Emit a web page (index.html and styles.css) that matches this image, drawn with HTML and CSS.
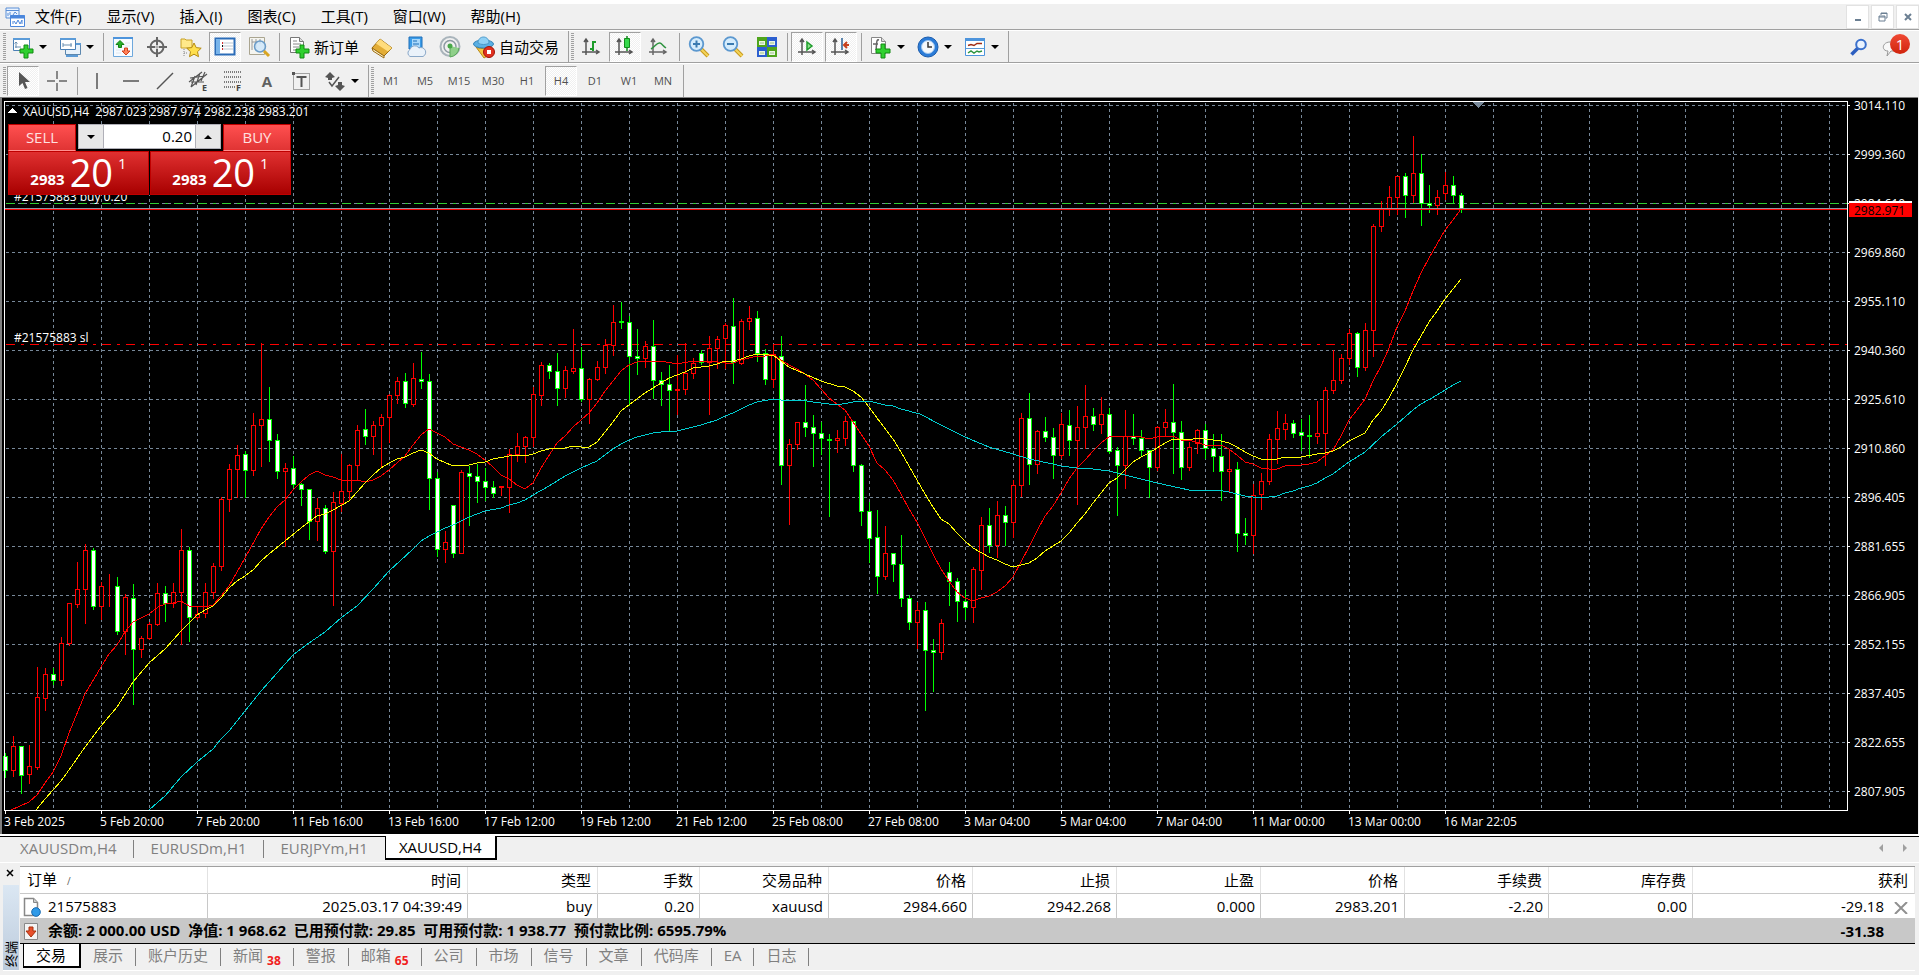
FILE: index.html
```html
<!DOCTYPE html>
<html lang="zh-CN">
<head>
  <meta charset="UTF-8">
  <title>XAUUSD,H4</title>
  <link rel="stylesheet" href="styles.css">
</head>
<body>
  <header class="menubar">
    <svg class="app-icon" width="20" height="20" viewBox="0 0 20 20" fill="none" stroke="#5b8fd6">
      <path d="M1 1h13v10H1zM1 3.500h13" fill="#eaf3ff"/>
      <path d="M3 9V6M5 8V5M8 8l2-3 2 2"/>
      <path d="M5.500 8.500h14v11h-14z" fill="#fff" stroke="#4a86dc"/>
      <path d="M5 10h15" stroke="#4a86dc" stroke-width="3"/>
      <path d="M8 17v-3M9 14l2 3 2-4 2 4 2-4v4" stroke="#4a86dc"/>
    </svg>
    <nav class="menu">
      <a href="#">文件(F)</a>
      <a href="#">显示(V)</a>
      <a href="#">插入(I)</a>
      <a href="#">图表(C)</a>
      <a href="#">工具(T)</a>
      <a href="#">窗口(W)</a>
      <a href="#">帮助(H)</a>
    </nav>
    <div class="window-buttons">
      <button aria-label="最小化"><svg width="12" height="12"><path d="M3 9h6" stroke="#6b7f92" stroke-width="2"/></svg></button>
      <button aria-label="还原"><svg width="12" height="12" fill="none" stroke="#6b7f92"><path d="M4 4V2h6v5H8.500M4 2.500h6M2 5h6v5H2zM2 6h6"/></svg></button>
      <button aria-label="关闭"><svg width="12" height="12"><path d="M3 3l6 6M9 3l-6 6" stroke="#6b7f92" stroke-width="2"/></svg></button>
    </div>
  </header>

  <div class="toolbar toolbar-main">
    <span class="grip"></span>
    <button class="tool drop" aria-label="新图表">
      <svg width="22" height="22" viewBox="0 0 22 22"><path d="M1.500 2.500h16v12h-16z" fill="#fff" stroke="#4a7fb5"/><path d="M1 3h17" stroke="#5b9bd8" stroke-width="2"/><path d="M4 12V6M2.500 7.500L4 6l1.500 1.500M3 11h6" stroke="#6b8fb0" fill="none"/><path d="M12 9h4v4h5v4h-5v5h-4v-5H8v-4h4z" fill="#2fd02f" stroke="#138a13"/></svg>
      <i class="caret"></i>
    </button>
    <button class="tool drop" aria-label="模板">
      <svg width="22" height="22" viewBox="0 0 22 22"><path d="M6.500 7.500h15v11h-15z" fill="#e8f2fb" stroke="#5c87ae"/><path d="M6 8h16M7 20h12" stroke="#5c9bd6" stroke-width="2"/><path d="M1.500 2.500h15v11h-15z" fill="#fff" stroke="#4a7fb5"/><path d="M1 3h16" stroke="#5b9bd8" stroke-width="2"/><path d="M4 7v4M4 9h9M12 7v4" stroke="#6b8fb0"/></svg>
      <i class="caret"></i>
    </button>
    <span class="sep"></span>
    <button class="tool" aria-label="市场报价">
      <svg width="22" height="22" viewBox="0 0 22 22"><path d="M1.500 1.500h19v19h-19z" fill="#f7fbff" stroke="#6ea8dc"/><path d="M1 2h20" stroke="#4d94dc" stroke-width="2"/><path d="M4 7h5M4 10h5M13 7h5M13 10h5M4 14h5M4 17h5" stroke="#dfe8f0"/><path d="M8 4.500l4 4H9.500v3h-3v-3H4z" fill="#28b028" stroke="#128012"/><path d="M14 19l-4-4h2.500v-3h3v3H18z" fill="#ff8058" stroke="#d0401c"/></svg>
    </button>
    <button class="tool" aria-label="数据窗口">
      <svg width="22" height="22" viewBox="0 0 22 22" fill="none" stroke="#666"><circle cx="11" cy="11" r="6.500" stroke-width="2"/><path d="M11 1v8M11 13v8M1 11h8M13 11h8" stroke-width="2"/><path d="M9 11h4M11 9v4" stroke="#999"/></svg>
    </button>
    <button class="tool" aria-label="导航">
      <svg width="22" height="22" viewBox="0 0 22 22"><path d="M1 3h4l1 1h6v8H1z" fill="#ffe98a" stroke="#c9a227"/><path d="M4 13v8M4 17h4" stroke="#888" stroke-dasharray="1 1"/><path d="M14 7l2.200 4.600 5 .6-3.700 3.500 1 5L14 18.200 9.500 20.700l1-5-3.700-3.500 5-.6z" fill="#ffdf4d" stroke="#b48a12"/></svg>
    </button>
    <button class="tool pressed" aria-label="终端">
      <svg width="22" height="22" viewBox="0 0 22 22"><path d="M1.500 2.500h19v16h-19z" fill="#fff" stroke="#2b6cb8" stroke-width="2"/><path d="M2 3h4v15H2z" fill="#78b4ea"/><path d="M9 7h10M9 10h10M9 13h10" stroke="#bcc7d2"/><path d="M8 7h1M8 13h1" stroke="#d33" stroke-width="2"/><path d="M8 10h1" stroke="#111" stroke-width="2"/></svg>
    </button>
    <button class="tool" aria-label="策略测试">
      <svg width="22" height="22" viewBox="0 0 22 22"><path d="M1.500 1.500h15v17h-15z" fill="#f5f5f0" stroke="#aaa590"/><path d="M4 3v11M8 3v9M12 3v5M4 6h9" stroke="#999"/><circle cx="12" cy="10.500" r="5.500" fill="#cfe6fa" fill-opacity=".85" stroke="#6b9cc8" stroke-width="1.500"/><path d="M16 15l5 5" stroke="#d9a520" stroke-width="3"/></svg>
    </button>
    <span class="sep"></span>
    <button class="tool label-tool">
      <svg width="22" height="22" viewBox="0 0 22 22"><path d="M2.500 1.500h9l4 4v11h-13z" fill="#fff" stroke="#777"/><path d="M11.500 1.500v4h4" fill="#ddd" stroke="#777"/><path d="M5 5h4M5 8h8M5 11h6M5 14h4" stroke="#888"/><path d="M12 9h4v4h5v4h-5v5h-4v-5H8v-4h4z" fill="#2fd02f" stroke="#138a13"/></svg>
      新订单
    </button>
    <button class="tool" aria-label="MetaEditor">
      <svg width="22" height="22" viewBox="0 0 22 22"><path d="M1 12l8-9 12 9-8 8z" fill="#e3ad36" stroke="#9a6b10"/><path d="M9 3l12 9-4 3.500L5 7.500z" fill="#ffdc7c"/><path d="M1 12l1 3 11 7v-2z" fill="#fff3cc" stroke="#9a6b10"/></svg>
    </button>
    <button class="tool" aria-label="MQL5">
      <svg width="22" height="22" viewBox="0 0 22 22"><path d="M4 1l13-0v12H4z" fill="#3b9ce8" stroke="#1f6fb8"/><path d="M7 3h8v8H7z" fill="#a9d8fb"/><path d="M8 8h6M8 5h4" stroke="#1f6fb8"/><path d="M5 20.500a4 4 0 010-7 5 5 0 019-1.500 4.300 4.300 0 014 8.500z" fill="#eaf2fa" stroke="#8aa8c8"/></svg>
    </button>
    <button class="tool" aria-label="信号">
      <svg width="22" height="22" viewBox="0 0 22 22" fill="none"><circle cx="11" cy="10.500" r="9.500" stroke="#a9b4bb" stroke-width="2"/><circle cx="11" cy="10.500" r="6" stroke="#8d9aa3" stroke-width="1.500"/><path d="M11 10v11a10 10 0 009-9" fill="#8fd08a" stroke="#5aa85a"/><circle cx="11" cy="10" r="2.500" fill="#48a848"/></svg>
    </button>
    <button class="tool label-tool">
      <svg width="22" height="22" viewBox="0 0 22 22"><path d="M3 11c2 2 12 2 15 0l-2 8-5 3z" fill="#f5c542" stroke="#b88a1a"/><ellipse cx="10.500" cy="8" rx="10" ry="4" fill="#5bb0e4" stroke="#2d7fb5"/><path d="M5 7c0-8 11-8 11 0-3 2-8 2-11 0z" fill="#8fd0f5" stroke="#4a98c8"/><circle cx="16" cy="16" r="5.500" fill="#e03020" stroke="#a01408"/><path d="M14 14h4v4h-4z" fill="#fff"/></svg>
      自动交易
    </button>
    <span class="sep end"></span>
    <span class="grip"></span>
    <button class="tool" aria-label="柱状图">
      <svg width="22" height="22" viewBox="0 0 22 22" fill="none"><path d="M6 3v16M2 16h17M4 6l2-3 2 3M16 14l3 2-3 2" stroke="#555" stroke-width="1.500"/><path d="M13 5v10M13 6h3M10 13h3" stroke="#1d9c2a" stroke-width="2"/></svg>
    </button>
    <button class="tool pressed" aria-label="蜡烛图">
      <svg width="22" height="22" viewBox="0 0 22 22" fill="none"><path d="M5 3v16M1 16h17M3 6l2-3 2 3M15 14l3 2-3 2" stroke="#555" stroke-width="1.500"/><path d="M13 0v15" stroke="#128a1c" stroke-width="1.500"/><path d="M10.500 2.500h5v9h-5z" fill="#35d94a" stroke="#128a1c"/></svg>
    </button>
    <button class="tool" aria-label="折线图">
      <svg width="22" height="22" viewBox="0 0 22 22" fill="none"><path d="M5 3v16M1 16h17M3 6l2-3 2 3M15 14l3 2-3 2" stroke="#666" stroke-width="1.500"/><path d="M3 13c4-2 6-7 9-6 2 .5 3 3 6 5" stroke="#2f9440" stroke-width="1.500"/></svg>
    </button>
    <span class="sep"></span>
    <button class="tool" aria-label="放大">
      <svg width="22" height="22" viewBox="0 0 22 22"><path d="M13 13l7 7" stroke="#c99a1c" stroke-width="4"/><path d="M13 13l7 7" stroke="#f4d45a" stroke-width="2"/><circle cx="8.500" cy="8" r="6.800" fill="#d5ecfc" stroke="#5c98cf" stroke-width="1.800"/><path d="M5 8h7M8.500 4.500v7" stroke="#3a7ab0" stroke-width="2"/></svg>
    </button>
    <button class="tool" aria-label="缩小">
      <svg width="22" height="22" viewBox="0 0 22 22"><path d="M13 13l7 7" stroke="#c99a1c" stroke-width="4"/><path d="M13 13l7 7" stroke="#f4d45a" stroke-width="2"/><circle cx="8.500" cy="8" r="6.800" fill="#d5ecfc" stroke="#5c98cf" stroke-width="1.800"/><path d="M5 8h7" stroke="#3a7ab0" stroke-width="2"/></svg>
    </button>
    <button class="tool" aria-label="平铺窗口">
      <svg width="22" height="22" viewBox="0 0 22 22"><path d="M1 1h10v10H1z" fill="#4fa51c"/><path d="M11 1h10v10H11z" fill="#2c5fd0"/><path d="M1 11h10v10H1z" fill="#2c5fd0"/><path d="M11 11h10v10H11z" fill="#4fa51c"/><path d="M3 5h6v4H3zM13 5h6v4h-6zM3 15h6v4H3zM13 15h6v4h-6z" fill="#eaf6e4"/><path d="M4 7h4M14 7h4M4 17h4M14 17h4" stroke="#9fc48c"/></svg>
    </button>
    <span class="sep"></span>
    <button class="tool pressed" aria-label="自动滚动">
      <svg width="22" height="22" viewBox="0 0 22 22" fill="none"><path d="M6 3v16M2 16h17M4 6l2-3 2 3M16 14l3 2-3 2" stroke="#555" stroke-width="1.500"/><path d="M11 6l5 4-5 4z" fill="#8ce08c" stroke="#1d9c2a" stroke-width="1.500"/></svg>
    </button>
    <button class="tool pressed" aria-label="图表平移">
      <svg width="22" height="22" viewBox="0 0 22 22" fill="none"><path d="M5 3v16M1 16h17M3 6l2-3 2 3M15 14l3 2-3 2" stroke="#555" stroke-width="1.500"/><path d="M12 2v12" stroke="#2a5f95" stroke-width="1.500"/><path d="M14 9h5M17 6l-3 3 3 3" stroke="#c8401c" stroke-width="2"/></svg>
    </button>
    <span class="sep"></span>
    <button class="tool drop" aria-label="指标">
      <svg width="22" height="22" viewBox="0 0 22 22"><path d="M1.500 1.500h10l4 4v12h-14z" fill="#fff" stroke="#888"/><path d="M11.500 1.500v4h4" fill="#ddd" stroke="#888"/><path d="M9 4c-3-1-2 3-3 10M3 8h5" fill="none" stroke="#666" stroke-width="1.500"/><path d="M11 8h4v5h5v4h-5v5h-4v-5H6v-4h5z" fill="#2fd02f" stroke="#138a13"/></svg>
      <i class="caret"></i>
    </button>
    <button class="tool drop" aria-label="周期">
      <svg width="22" height="22" viewBox="0 0 22 22"><circle cx="11" cy="11" r="10" fill="#2b7cd8" stroke="#1c5cac"/><circle cx="11" cy="11" r="6.500" fill="#f4f8fc" stroke="#9cc4ee"/><path d="M11 6v5h4" fill="none" stroke="#333" stroke-width="1.500"/></svg>
      <i class="caret"></i>
    </button>
    <button class="tool drop" aria-label="模板">
      <svg width="22" height="22" viewBox="0 0 22 22" fill="none"><path d="M1.500 2.500h19v17h-19z" fill="#fff" stroke="#4d94dc"/><path d="M1 3.500h20" stroke="#4d94dc" stroke-width="3"/><path d="M2 12.500h18" stroke="#5b9bd8"/><path d="M4 9.500l3-1 3 1 3-2h5" stroke="#a02c14" stroke-width="1.500"/><path d="M4 17l3-2 3 2 3-2 2 1 3-1" stroke="#2f9440" stroke-width="1.500"/></svg>
      <i class="caret"></i>
    </button>
    <span class="sep end"></span>
    <div class="toolbar-right">
      <button aria-label="搜索">
        <svg width="18" height="18" viewBox="0 0 18 18" fill="none"><path d="M1.500 16.500L8 10" stroke="#2d5fc0" stroke-width="3.500"/><circle cx="11" cy="6.500" r="4.800" fill="#eaf3ff" stroke="#3b70cc" stroke-width="2"/></svg>
      </button>
      <button class="messages" aria-label="消息">
        <svg width="22" height="20" viewBox="0 0 22 20"><path d="M8 5h8c7 0 7 9 0 9H9l-4 5 1-5C-1 14 0 5 8 5z" fill="#f8f8f8" stroke="#999"/></svg>
        <span class="badge">1</span>
      </button>
    </div>
  </div>

  <div class="toolbar toolbar-draw">
    <span class="grip"></span>
    <button class="tool pressed" aria-label="光标">
      <svg width="22" height="22" viewBox="0 0 22 22"><path d="M7 2v14l3.500-3 2.500 6 2.500-1-2.500-6h5z" fill="#555"/></svg>
    </button>
    <button class="tool" aria-label="十字准线">
      <svg width="22" height="22" viewBox="0 0 22 22"><path d="M11 1v8M11 13v8M1 11h8M13 11h8" stroke="#666" stroke-width="1.500"/></svg>
    </button>
    <span class="sep"></span>
    <button class="tool" aria-label="垂直线">
      <svg width="22" height="22" viewBox="0 0 22 22"><path d="M11 3v16" stroke="#555" stroke-width="1.500"/></svg>
    </button>
    <button class="tool" aria-label="水平线">
      <svg width="22" height="22" viewBox="0 0 22 22"><path d="M3 11h16" stroke="#555" stroke-width="1.500"/></svg>
    </button>
    <button class="tool" aria-label="趋势线">
      <svg width="22" height="22" viewBox="0 0 22 22"><path d="M3 19L19 3" stroke="#555" stroke-width="1.500"/></svg>
    </button>
    <button class="tool" aria-label="等距通道">
      <svg width="22" height="22" viewBox="0 0 22 22"><path d="M1 12L14 2M3 17L19 4M2 8l15-2M3 12h13M7 6L3 17M12 3L8 15M17 2l-4 9" stroke="#555" stroke-width="1.200" fill="none"/><text x="14" y="21" class="tool-letter">E</text></svg>
    </button>
    <button class="tool" aria-label="斐波那契">
      <svg width="22" height="22" viewBox="0 0 22 22"><path d="M2 2h18M2 7h18M2 12h18M2 17h11" stroke="#555" stroke-width="1.500" stroke-dasharray="1 1"/><text x="14" y="21" class="tool-letter">F</text></svg>
    </button>
    <button class="tool text-tool">A</button>
    <button class="tool" aria-label="文本标签">
      <svg width="22" height="22" viewBox="0 0 22 22"><path d="M3.500 3.500h16v16h-16z" fill="none" stroke="#555" stroke-dasharray="1 1"/><path d="M6.500 7h10M11.500 7v10" stroke="#555" stroke-width="2"/><path d="M2 2h3v3H2z" fill="#555"/></svg>
    </button>
    <button class="tool drop" aria-label="箭头">
      <svg width="22" height="22" viewBox="0 0 22 22"><path d="M1 7l5-5 5 5-3 1v2H4V8z" fill="#555"/><path d="M11 16l5 5 5-5-3-1v-3h-4v3z" fill="#555"/><path d="M5 12l3 4 7-9" stroke="#555" stroke-width="1.500" fill="none"/></svg>
      <i class="caret"></i>
    </button>
    <span class="sep end"></span>
    <span class="grip"></span>
    <button class="tool period">M1</button>
    <button class="tool period">M5</button>
    <button class="tool period">M15</button>
    <button class="tool period">M30</button>
    <button class="tool period">H1</button>
    <button class="tool period pressed">H4</button>
    <button class="tool period">D1</button>
    <button class="tool period">W1</button>
    <button class="tool period">MN</button>
    <span class="sep end"></span>
  </div>

  <main class="chart">
    <svg id="chart" class="chart-canvas"></svg>
    <div class="trade-panel">
      <button class="side sell">SELL</button>
      <div class="volume">
        <button aria-label="减少"><i class="caret"></i></button>
        <input type="text" value="0.20" aria-label="手数">
        <button aria-label="增加"><i class="caret up"></i></button>
      </div>
      <button class="side buy">BUY</button>
      <button class="quote"><b>2983</b><span class="big">20</span><span class="pip">1</span></button>
      <button class="quote"><b>2983</b><span class="big">20</span><span class="pip">1</span></button>
    </div>
  </main>

  <nav class="chart-tabs">
    <a href="#">XAUUSDm,H4</a>
    <a href="#">EURUSDm,H1</a>
    <a href="#">EURJPYm,H1</a>
    <a href="#" class="active">XAUUSD,H4</a>
    <span class="scroll">
      <button aria-label="向左"><svg width="6" height="10"><path d="M5 1v8L1 5z" fill="#a0a0a0"/></svg></button>
      <button aria-label="向右"><svg width="6" height="10"><path d="M1 1v8l4-4z" fill="#a0a0a0"/></svg></button>
    </span>
  </nav>

  <section class="terminal">
    <aside class="terminal-side">
      <button class="close" aria-label="关闭"><svg width="8" height="8"><path d="M1 1l6 6M7 1L1 7" stroke="#000" stroke-width="1.500"/></svg></button>
      <div class="terminal-title"><span>终端</span></div>
    </aside>
    <div class="terminal-body">
      <table class="orders">
        <colgroup>
          <col class="c-order"><col class="c-time"><col class="c-type"><col class="c-lots"><col class="c-symbol">
          <col class="c-money"><col class="c-money"><col class="c-money"><col class="c-money"><col class="c-money"><col class="c-money"><col>
        </colgroup>
        <thead>
          <tr>
            <th>订单 <small>/</small></th><th>时间</th><th>类型</th><th>手数</th><th>交易品种</th><th>价格</th>
            <th>止损</th><th>止盈</th><th>价格</th><th>手续费</th><th>库存费</th><th>获利</th>
          </tr>
        </thead>
        <tbody>
          <tr>
            <td><svg width="18" height="20" viewBox="0 0 18 20"><path d="M1.500 1.500h9l4 4v13h-13z" fill="#fff" stroke="#888" stroke-width="1.500"/><path d="M10.500 1.500v4h4" fill="#ccc" stroke="#888"/><circle cx="13" cy="15" r="4.300" fill="#2f9ae8" stroke="#1468b0"/></svg>21575883</td>
            <td>2025.03.17 04:39:49</td><td>buy</td><td>0.20</td><td>xauusd</td><td>2984.660</td>
            <td>2942.268</td><td>0.000</td><td>2983.201</td><td>-2.20</td><td>0.00</td>
            <td class="profit">-29.18<button aria-label="平仓"><svg width="14" height="12"><path d="M1 0l12 12M13 0L1 12" stroke="#909090" stroke-width="2"/></svg></button></td>
          </tr>
          <tr class="total">
            <td colspan="11"><svg width="18" height="20" viewBox="0 0 18 20"><path d="M1.500 1.500h13v16h-13z" fill="#f4f4f4" stroke="#888"/><path d="M6 5h4v4h3l-5 6-5-6h3z" fill="#e8502c" stroke="#a8300c"/></svg>余额: 2 000.00 USD&nbsp; 净值: 1 968.62&nbsp; 已用预付款: 29.85&nbsp; 可用预付款: 1 938.77&nbsp; 预付款比例: 6595.79%</td>
            <td class="profit">-31.38</td>
          </tr>
        </tbody>
      </table>
      <nav class="terminal-tabs">
        <a href="#" class="active">交易</a>
        <a href="#">展示</a>
        <a href="#">账户历史</a>
        <a href="#">新闻<sub>38</sub></a>
        <a href="#">警报</a>
        <a href="#">邮箱<sub>65</sub></a>
        <a href="#">公司</a>
        <a href="#">市场</a>
        <a href="#">信号</a>
        <a href="#">文章</a>
        <a href="#">代码库</a>
        <a href="#">EA</a>
        <a href="#">日志</a>
      </nav>
    </div>
  </section>

  <script>
    // y of high, body top, body bottom, low; last field: r = up, g = down
    const candles = `
752 756 770 777 g,735 746 770 776 r,745 746 775 793 g,744 766 774 783 r,666 697 767 769 r,
667 674 698 710 r,667 674 680 684 g,636 643 680 685 r,603 603 643 645 r,561 589 604 607 r,
543 550 589 623 r,547 550 606 609 g,581 586 606 619 r,573 586 586 606 r,576 586 631 634 g,
593 597 631 654 r,583 598 649 704 g,635 638 649 657 r,621 624 638 639 r,582 593 624 625 r,
585 593 603 621 g,582 592 603 607 r,528 550 592 644 r,546 550 617 641 g,606 614 617 619 r,
582 592 613 617 r,562 566 592 598 r,496 499 566 570 r,463 469 499 511 r,444 455 469 497 r,
450 454 470 497 g,412 425 470 475 r,342 419 425 466 r,386 419 440 461 g,433 440 471 478 g,
462 468 471 546 r,455 468 484 487 g,482 484 489 505 g,488 489 521 539 g,497 508 521 540 r,
504 508 551 553 g,491 502 551 605 r,453 491 503 511 r,463 465 491 499 r,424 430 465 480 r,
408 429 436 444 g,420 425 436 454 r,413 417 425 466 r,393 395 417 442 r,376 381 395 403 r,
372 381 403 407 g,362 378 404 406 r,351 379 381 388 g,373 381 478 509 g,471 478 549 556 g,
530 542 549 562 r,504 505 553 557 g,469 472 553 553 r,465 473 476 525 g,463 476 481 502 g,
467 481 487 500 g,480 487 493 497 g,486 486 487 495 r,448 454 487 512 r,432 446 454 461 r,
435 437 446 462 r,386 394 437 446 r,361 365 395 405 r,362 365 371 378 g,352 371 388 405 g,
365 370 388 397 r,328 368 371 373 r,346 368 399 401 g,377 379 399 423 r,360 367 379 380 r,
338 345 367 373 r,304 322 345 355 r,301 321 322 328 g,315 322 356 405 g,328 356 358 374 g,
340 346 358 367 r,319 346 380 398 g,371 380 384 405 g,364 384 390 430 g,354 389 390 414 r,
342 373 389 394 r,357 363 373 378 r,349 353 362 364 g,335 348 362 414 r,335 339 348 368 r,
322 325 338 368 r,297 326 362 383 g,318 321 363 364 r,305 318 321 329 r,310 318 353 361 g,
348 353 379 384 g,343 354 379 387 r,335 356 465 484 g,438 444 465 524 r,421 422 444 449 r,
384 422 427 436 g,414 427 433 466 g,421 433 438 454 g,433 439 440 516 g,429 438 440 452 r,
415 421 438 445 r,421 421 465 471 g,463 465 511 525 g,501 511 538 562 g,509 537 576 593 g,
525 553 576 579 r,553 553 564 581 g,534 564 598 606 g,594 598 622 629 g,601 610 622 648 r,
601 610 650 710 g,638 650 652 691 g,618 623 652 659 r,561 572 581 605 g,577 581 601 621 g,
589 601 607 619 g,566 569 607 622 r,516 525 570 589 r,507 525 545 552 g,500 515 545 557 r,
505 515 522 545 g,479 485 522 537 r,412 418 485 496 r,392 418 464 484 g,429 431 464 473 r,
416 431 437 441 g,427 437 455 478 g,412 424 455 458 r,409 425 440 455 g,405 427 440 504 r,
384 416 427 448 r,407 416 424 430 g,396 414 424 433 r,407 414 451 453 g,446 450 465 515 g,
409 436 465 488 r,413 436 438 444 g,429 438 450 456 g,450 450 467 497 g,425 427 467 470 r,
408 422 427 435 r,383 422 432 473 g,420 432 467 479 g,441 447 467 470 r,428 430 443 453 r,
423 430 448 458 g,433 448 456 471 g,433 456 471 500 g,448 469 471 492 r,461 469 533 551 g,
517 533 535 544 g,483 495 535 553 r,472 481 494 509 r,433 439 481 484 r,410 428 439 463 r,
413 423 429 439 r,419 423 433 437 g,418 432 435 450 g,414 435 436 457 g,400 433 436 443 r,
386 390 433 465 r,349 380 390 393 r,353 358 380 383 r,328 333 358 364 r,331 333 367 376 g,
322 330 367 370 r,223 226 330 356 r,200 208 226 231 r,185 197 209 215 r,175 176 197 214 r,
172 176 195 217 g,135 173 195 202 r,153 173 203 225 g,184 203 205 212 g,189 197 205 214 r,
171 185 193 199 r,175 185 195 202 g,192 195 208 212 g`.trim().split(',').map(c => c.trim().split(' '));

    // moving averages
    const averages = [
      ['ma-red', '11,810 29,802 37,795 45,783 53,772 61,756 69,733 85,694 101,667 109,654 117,645 125,632 133,622 149,614 158,607 165,604 173,603 181,601 189,606 197,606 205,607 213,605 221,596 229,586 245,558 261,529 269,517 277,507 285,500 293,490 301,482 309,475 317,471 325,475 333,477 341,480 357,480 365,482 373,480 381,476 389,470 397,463 405,456 413,445 421,435 429,429 437,433 445,437 453,444 469,450 477,454 485,460 493,467 501,475 509,479 517,485 525,489 533,483 541,468 557,443 565,436 573,427 581,420 589,413 597,403 605,391 621,371 629,365 637,362 645,361 653,362 661,361 677,364 693,361 709,361 725,363 733,363 741,360 757,356 765,356 773,354 781,360 789,365 797,369 805,374 813,380 821,389 829,398 837,404 845,410 853,422 861,434 869,446 877,463 885,470 893,480 901,494 909,509 917,522 925,538 933,554 941,569 949,581 957,592 965,598 973,601 981,598 989,596 997,592 1005,586 1013,577 1021,562 1029,547 1037,531 1045,516 1053,506 1061,493 1069,479 1077,468 1085,460 1093,451 1101,443 1109,437 1117,436 1141,437 1149,439 1157,437 1173,436 1181,440 1189,440 1205,445 1221,445 1229,449 1237,455 1245,462 1253,464 1261,468 1269,469 1277,469 1285,466 1301,465 1309,464 1317,462 1325,456 1333,450 1341,436 1349,420 1357,410 1365,399 1373,381 1381,366 1389,348 1397,327 1405,311 1413,291 1421,273 1429,258 1437,244 1445,230 1453,220 1461,209'],
      ['ma-yellow', '36,810 45,799 61,781 69,770 85,747 101,726 117,707 133,682 149,663 165,649 181,631 197,615 205,610 213,606 221,598 229,588 237,581 245,576 253,570 261,561 269,554 285,541 301,528 317,516 325,514 333,510 349,501 357,492 365,483 373,475 381,468 389,463 397,459 405,457 413,453 421,450 429,453 437,459 453,466 469,465 477,463 485,462 493,459 509,456 517,455 525,456 533,454 541,451 549,449 565,448 573,446 581,447 589,447 597,442 605,432 613,422 621,411 629,405 645,393 653,388 661,383 669,378 677,375 685,372 693,368 709,366 717,364 725,361 733,361 741,359 749,356 757,354 769,355 773,355 781,361 789,367 805,374 821,381 837,386 845,387 853,391 861,397 869,407 877,418 893,439 901,452 909,466 917,480 925,494 933,507 941,519 949,524 957,533 965,541 973,548 989,557 997,560 1005,564 1013,567 1021,565 1029,563 1037,558 1045,551 1053,546 1061,541 1069,533 1077,523 1085,514 1093,503 1101,493 1109,483 1117,478 1125,470 1133,462 1141,457 1149,453 1157,448 1165,443 1173,439 1181,439 1189,440 1197,438 1205,439 1213,440 1221,441 1229,443 1237,447 1245,452 1253,456 1261,459 1269,460 1277,459 1285,457 1301,457 1317,454 1325,453 1333,451 1341,447 1349,441 1357,437 1365,433 1373,420 1381,411 1389,398 1397,383 1405,367 1413,350 1421,336 1429,322 1437,311 1445,299 1453,289 1461,279'],
      ['ma-cyan', '149,810 165,796 181,777 197,762 213,749 221,739 229,731 245,711 261,691 277,673 293,655 309,643 325,632 341,618 357,606 373,589 389,571 400,561 413,549 421,541 429,536 445,528 453,525 469,517 485,511 501,508 509,505 517,503 525,500 533,495 549,486 565,476 581,468 597,461 605,455 613,449 621,444 629,440 637,437 653,433 669,431 677,431 701,425 717,420 725,416 733,413 749,405 757,402 773,399 781,400 800,400 813,402 829,404 837,405 853,402 869,401 885,405 893,406 901,409 920,414 941,425 965,437 989,447 1013,454 1029,459 1053,464 1061,466 1077,468 1093,469 1109,471 1125,475 1141,479 1157,483 1180,488 1189,490 1217,490 1229,492 1245,496 1261,498 1277,496 1285,493 1293,491 1301,488 1309,486 1317,483 1325,478 1333,474 1349,462 1365,452 1381,437 1397,424 1413,410 1421,404 1437,395 1445,390 1453,385 1461,381']
    ];

    const prices = ['3014.110', '2999.360', '2984.610', '2969.860', '2955.110', '2940.360', '2925.610', '2910.860',
      '2896.405', '2881.655', '2866.905', '2852.155', '2837.405', '2822.655', '2807.905'];
    const times = ['3 Feb 2025', '5 Feb 20:00', '7 Feb 20:00', '11 Feb 16:00', '13 Feb 16:00', '17 Feb 12:00', '19 Feb 12:00',
      '21 Feb 12:00', '25 Feb 08:00', '27 Feb 08:00', '3 Mar 04:00', '5 Mar 04:00', '7 Mar 04:00', '11 Mar 00:00',
      '13 Mar 00:00', '16 Mar 22:05'];

    function drawChart() {
      const svg = document.getElementById('chart');
      const w = svg.clientWidth, h = svg.clientHeight;
      const left = 4, top = 101, offset = 97;
      const right = w - 71, bottom = offset + h - 24;
      const line = (cls, x1, y1, x2, y2) =>
        `<line class="${cls}" x1="${x1 + 0.5}" y1="${y1 + 0.5}" x2="${x2 + 0.5}" y2="${y2 + 0.5}"/>`;
      const text = (cls, x, y, t) => `<text class="${cls}" x="${x}" y="${y}">${t}</text>`;
      let out = '';

      for (let x = 53; x < right; x += 48) out += line('grid', x, top + 1, x, bottom);
      prices.forEach((p, i) => {
        const y = 105 + i * 49;
        out += line('grid', left + 1, y, right, y) + line('frame', right, y, right + 2, y);
        out += text('axis', right + 7, y + 5, p);
      });
      times.forEach((t, i) => {
        const x = 5 + i * 96;
        out += line('frame', x, bottom, x, bottom + 3) + text('axis', x - 1, bottom + 16, t);
      });

      out += line('order buy-line', 5, 203, right, 203);
      out += line('order sl-line', 5, 344, right, 344);
      out += text('axis', 14, 201, '#21575883 buy 0.20') + text('axis', 14, 342, '#21575883 sl');

      candles.forEach(([high, t, b, low, dir], i) => {
        const x = 5 + i * 8;
        out += line('wick ' + dir, x, +high, x, +low);
        out += `<rect class="body ${dir}" x="${x - 1.5}" y="${+t + 0.5}" width="4" height="${b - t}"/>`;
      });
      averages.forEach(([cls, points]) => {
        out += `<polyline class="${cls}" points="${points}"/>`;
      });

      out += line('bid', left, 208, right, 208) + line('ask', left, 209, right, 209);
      out += `<rect class="frame" x="${left + 0.5}" y="${top + 0.5}" width="${right - left}" height="${bottom - top}"/>`;
      out += `<path class="shift" d="M1472 102h12l-6 6z"/>`;
      out += `<rect x="${right + 2}" y="201" width="63" height="2" fill="#fff"/>`;
      out += `<rect x="${right + 2}" y="203" width="63" height="14" fill="#f00"/>` + text('axis current', right + 7, 215, '2982.971');
      out += `<path d="M8 113h9l-4.500-5z" fill="#fff"/>` + text('axis', 23, 116, 'XAUUSD,H4&#160; 2987.023 2987.974 2982.238 2983.201');

      svg.setAttribute('viewBox', `0 ${offset} ${w} ${h}`);
      svg.innerHTML = out;
    }
    drawChart();
    window.addEventListener('resize', drawChart);
  </script>
</body>
</html>
```

FILE: styles.css
```css
* {
  box-sizing: border-box;
}
body {
  margin: 0;
  height: 100vh;
  display: flex;
  flex-direction: column;
  background-color: #f0f0f0;
  font-family: "Open Sans", "Noto Sans CJK SC", sans-serif;
  font-size: 15px;
  color: #000;
  overflow: hidden;
}
a {
  color: inherit;
  text-decoration: none;
}
button {
  border: none;
  background: none;
  padding: 0;
  font: inherit;
  color: inherit;
}

/* menu */
.menubar {
  display: flex;
  align-items: center;
  height: 30px;
  border-top: 4px solid #fff;
  border-bottom: 1px solid #a0a0a0;
  padding-left: 5px;
}
.menu {
  display: flex;
  gap: 25px;
  margin-left: 10px;
  padding-bottom: 2px;
  line-height: 22px;
  white-space: nowrap;
}
.window-buttons {
  display: flex;
  gap: 2px;
  margin-left: auto;
}
.window-buttons button {
  display: flex;
  align-items: center;
  justify-content: center;
  width: 23px;
  height: 24px;
  background-color: #fff;
  border: 1px solid #e2e2e2;
}

/* toolbars */
.toolbar {
  display: flex;
  align-items: center;
  height: 33px;
  border-top: 1px solid #fff;
  border-bottom: 1px solid #a0a0a0;
  padding-left: 3px;
}
.toolbar-draw {
  height: 34px;
  border-bottom: none;
}
.grip {
  width: 3px;
  height: 28px;
  background: repeating-linear-gradient(#a0a0a0 0 1px, #f0f0f0 1px 2px);
}
.sep {
  width: 1px;
  height: 28px;
  margin: 0 2px 0 3px;
  background-color: #a0a0a0;
}
.sep.end {
  height: 32px;
}
.tool {
  display: flex;
  align-items: center;
  justify-content: center;
  flex: none;
  width: 32px;
  height: 30px;
  margin: 0 1px;
  border: 1px solid transparent;
}
.tool.pressed {
  border-color: #a0a0a0 #fff #fff #a0a0a0;
  background: repeating-conic-gradient(#fff 0 25%, #f0f0f0 0 50%) 0 0 / 2px 2px;
}
.tool.drop {
  width: 45px;
  gap: 5px;
}
.tool.label-tool {
  width: auto;
  padding: 0 4px;
  gap: 4px;
}
.caret {
  width: 0;
  height: 0;
  border: 4px solid transparent;
  border-top: 4px solid #000;
  border-bottom: none;
}
.caret.up {
  border-top: none;
  border-bottom: 4px solid #000;
}
.tool.period {
  font-size: 11px;
  color: #505050;
}
.tool.text-tool {
  font-size: 15px;
  font-weight: bold;
  color: #606060;
}
.tool-letter {
  font-size: 9px;
  font-weight: bold;
  fill: #444;
}
.tool svg {
  flex: none;
  overflow: visible;
}
.toolbar-right {
  display: flex;
  align-items: center;
  gap: 14px;
  margin-left: auto;
  padding-right: 15px;
}
.toolbar-right button {
  display: flex;
}
.messages {
  position: relative;
}
.badge {
  position: absolute;
  left: 8px;
  top: -3px;
  width: 20px;
  height: 20px;
  border-radius: 10px;
  background: linear-gradient(#f04a34, #d0240c);
  color: #fff;
  font-size: 15px;
  line-height: 20px;
  text-align: center;
}

/* chart */
.chart {
  position: relative;
  flex: 1;
  min-height: 0;
  background-color: #000;
  border-right: 1px solid #f0f0f0;
}
.chart-canvas {
  display: block;
  width: 100%;
  height: 100%;
  box-shadow: inset 2px 1px #808080;
  shape-rendering: crispEdges;
}
.grid {
  stroke: #778899;
  stroke-dasharray: 3 3;
}
.frame {
  fill: none;
  stroke: #fff;
}
.axis {
  font-size: 12px;
  fill: #fff;
}
.axis.current {
  fill: #000;
}
.order {
  stroke-dasharray: 9 6 3 6;
}
.buy-line {
  stroke: #32cd32;
}
.sl-line {
  stroke: #f00;
}
.wick.r, .body.r {
  stroke: #f00;
}
.wick.g, .body.g {
  stroke: #0f0;
}
.body.r {
  fill: #000;
}
.body.g {
  fill: #fff;
}
.ma-red, .ma-yellow, .ma-cyan {
  fill: none;
  stroke: #f00;
}
.ma-yellow {
  stroke: #ff0;
}
.ma-cyan {
  stroke: #00ced1;
}
.bid {
  stroke: #8c98a4;
}
.ask {
  stroke: #f00;
}
.shift {
  fill: #778899;
}

/* one click trading */
.trade-panel {
  position: absolute;
  left: 8px;
  top: 27px;
  width: 283px;
  display: flex;
  flex-wrap: wrap;
  justify-content: space-between;
  background-color: #000;
}
.side {
  width: 68px;
  height: 27px;
  background: linear-gradient(#ff5050, #e03434);
  border: 1px solid #c00000;
  border-bottom: 1px solid #ff9090;
  color: #ffe0e0;
  line-height: 22px;
  padding-bottom: 2px;
}
.volume {
  display: flex;
  width: 143px;
  height: 25px;
  border: 1px solid #b0b0b8;
  background-color: #fff;
}
.volume button {
  display: flex;
  align-items: center;
  justify-content: center;
  width: 24px;
  background-color: #e8e8e8;
}
.volume input {
  flex: 1;
  min-width: 0;
  border: 1px solid #b0b0b8;
  border-width: 0 1px;
  padding: 0 3px 2px;
  text-align: right;
  font: inherit;
}
.quote {
  display: flex;
  align-items: flex-end;
  justify-content: center;
  width: 141px;
  height: 44px;
  padding-bottom: 5px;
  border: 1px solid #c00000;
  background: linear-gradient(#e03030, #a80000);
  color: #fff;
  line-height: 20px;
}
.quote .big {
  font-size: 38px;
  line-height: 34px;
  margin: 0 5px;
}
.quote .pip {
  align-self: flex-start;
  line-height: 22px;
}

/* chart tabs */
.chart-tabs {
  display: flex;
  height: 27px;
  border-top: 1px solid #000;
  box-shadow: 0 -2px #fff;
  border-bottom: 1px solid #fff;
  margin-top: 2px;
  padding-left: 3px;
  color: #808080;
  line-height: 22px;
}
.chart-tabs a {
  position: relative;
  height: 22px;
  padding: 0 17px;
}
.chart-tabs a:not(.active)::after {
  content: "";
  position: absolute;
  right: 0;
  top: 3px;
  height: 18px;
  border-right: 1px solid #808080;
}
.chart-tabs a:nth-child(3)::after {
  display: none;
}
.chart-tabs .active {
  height: 24px;
  padding: 0 13px;
  margin-top: -1px;
  background-color: #fff;
  border: 1px solid #000;
  border-top: none;
  border-width: 0 2px 2px 1px;
  color: #000;
}
.scroll {
  display: flex;
  align-items: center;
  gap: 18px;
  margin-left: auto;
  padding: 0 11px 4px 0;
}
.scroll button {
  display: flex;
}

/* terminal */
.terminal {
  display: flex;
  margin: 3px 4px 4px 3px;
  border-bottom: 1px solid #fff;
}
.terminal-side {
  display: flex;
  flex-direction: column;
  width: 17px;
  padding-right: 1px;
}
.close {
  display: flex;
  margin: 3px 0 8px 3px;
}
.terminal-title {
  flex: 1;
  display: flex;
  align-items: flex-end;
  justify-content: center;
  background: linear-gradient(#dbe7f3, #bccbdc);
  font-size: 13px;
  line-height: 15px;
  padding-bottom: 3px;
}
.terminal-title span {
  writing-mode: vertical-rl;
  text-orientation: sideways;
  transform: rotate(180deg);
}
.terminal-body {
  flex: 1;
  min-width: 0;
}
.orders {
  width: 100%;
  table-layout: fixed;
  border-collapse: separate;
  border-spacing: 0;
  border-top: 1px solid #a0a0a0;
  border-bottom: 1px solid #000;
  background-color: #fff;
  white-space: nowrap;
}
.c-order { width: 188px; }
.c-time { width: 260px; }
.c-type { width: 130px; }
.c-lots { width: 102px; }
.c-symbol { width: 129px; }
.c-money { width: 144px; }
.orders th {
  height: 27px;
  padding: 0 6px 0 7px;
  border-right: 1px solid #e2e2e2;
  border-bottom: 1px solid #c8c8c8;
  font-weight: normal;
  line-height: 24px;
  text-align: right;
}
.orders th small {
  font-size: 10px;
  margin-left: 6px;
  color: #606060;
}
.orders td {
  height: 24px;
  padding: 0 5px 0 3px;
  border-right: 1px solid #c8c8c8;
  line-height: 22px;
  text-align: right;
}
.orders th:first-child, .orders td:first-child {
  text-align: left;
}
.orders td:last-child {
  border-right: none;
}
.orders td svg {
  vertical-align: middle;
  margin-right: 7px;
}
.orders .profit {
  padding-right: 31px;
}
.orders .profit button {
  float: right;
  width: 14px;
  margin-right: -24px;
}
.orders .profit svg {
  margin: 0;
}
.orders .total td {
  height: 25px;
  border: none;
  background-color: #c8c8c8;
  font-weight: bold;
}

.terminal-tabs {
  display: flex;
  height: 26px;
  padding-left: 3px;
  color: #808080;
  line-height: 22px;
}
.terminal-tabs a {
  height: 24px;
  padding: 0 13px 0 12px;
  position: relative;
}
.terminal-tabs a:not(.active)::after {
  content: "";
  position: absolute;
  right: 0;
  top: 4px;
  height: 18px;
  border-right: 1px solid #808080;
}
.terminal-tabs .active {
  background-color: #fff;
  border: 1px solid #000;
  border-width: 0 2px 2px 1px;
  color: #000;
}
.terminal-tabs sub {
  margin-left: 4px;
  font-size: 12px;
  font-weight: bold;
  line-height: 12px;
  color: #f02020;
}
```
